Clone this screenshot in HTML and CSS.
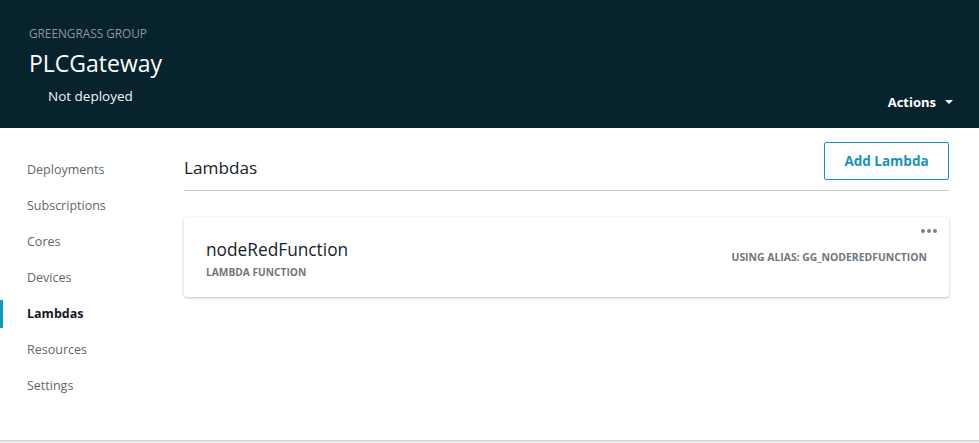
FILE: index.html
```html
<!DOCTYPE html>
<html>
<head>
<meta charset="utf-8">
<link rel="stylesheet" href="styles.css">
</head>
<body>
<div class="page">
  <header class="top">
    <div class="top-left">
      <div class="eyebrow">GREENGRASS GROUP</div>
      <h1 class="title">PLCGateway</h1>
      <div class="status">Not deployed</div>
    </div>
    <div class="actions">Actions <span class="caret"></span></div>
  </header>
  <div class="body">
    <nav class="nav">
      <a class="nav-item">Deployments</a>
      <a class="nav-item">Subscriptions</a>
      <a class="nav-item">Cores</a>
      <a class="nav-item">Devices</a>
      <a class="nav-item active">Lambdas</a>
      <a class="nav-item">Resources</a>
      <a class="nav-item">Settings</a>
    </nav>
    <main class="main">
      <div class="section-head">
        <h2 class="section-title">Lambdas</h2>
        <button class="btn">Add Lambda</button>
      </div>
      <div class="card">
        <div class="card-left">
          <div class="card-title">nodeRedFunction</div>
          <div class="card-sub">LAMBDA FUNCTION</div>
        </div>
        <div class="card-alias">USING ALIAS: GG_NODEREDFUNCTION</div>
        <div class="dots"><span></span><span></span><span></span></div>
      </div>
    </main>
  </div>
</div>
</body>
</html>
```
FILE: styles.css
```css
* { box-sizing: border-box; }
html, body { margin: 0; padding: 0; }
body {
  font-family: "Open Sans", "Noto Sans", sans-serif;
  background: #eaeded;
  width: 979px;
  height: 443px;
  overflow: hidden;
}
.page {
  height: 440px;
  background: #fff;
  box-shadow: 0 1px 1px #d5d5d5;
  display: flex;
  flex-direction: column;
}
.top {
  height: 128px;
  background: #06232e;
  display: flex;
  justify-content: space-between;
  align-items: flex-end;
  padding: 0 26px 17px 29px;
}
.top-left {
  align-self: flex-start;
  padding-top: 26px;
}
.eyebrow {
  font-size: 11.8px;
  line-height: 14px;
  color: #8d979c;
}
.title {
  margin: 9px 0 0;
  font-size: 23px;
  font-weight: 400;
  line-height: 28px;
  color: #fff;
}
.status {
  margin: 10px 0 0 19px;
  font-size: 13.5px;
  line-height: 18px;
  color: #f2f3f3;
}
.actions {
  color: #fff;
  font-weight: 700;
  font-size: 13px;
  line-height: 18px;
  display: flex;
  align-items: center;
  gap: 9px;
}
.caret {
  width: 0; height: 0;
  border-left: 4px solid transparent;
  border-right: 4px solid transparent;
  border-top: 4px solid #fff;
}
.body {
  flex: 1;
  display: flex;
}
.nav {
  width: 184px;
  padding-top: 23px;
  display: flex;
  flex-direction: column;
}
.nav-item {
  height: 36px;
  display: flex;
  align-items: center;
  padding-left: 27px;
  font-size: 12.5px;
  color: #5f666d;
  position: relative;
}
.nav-item.active {
  color: #16191f;
  font-weight: 700;
}
.nav-item.active::before {
  content: "";
  position: absolute;
  left: 0; top: 5px;
  width: 3px; height: 28px;
  background: #0a9ac7;
}
.main {
  flex: 1;
  padding-right: 30px;
}
.section-head {
  display: flex;
  justify-content: space-between;
  align-items: flex-end;
  padding-top: 14px;
  padding-bottom: 10px;
  border-bottom: 1px solid #c6c6c6;
}
.section-title {
  margin: 0;
  font-size: 17.2px;
  font-weight: 400;
  line-height: 22px;
  color: #16232b;
  padding-bottom: 1px;
}
.btn {
  height: 38px;
  width: 125px;
  border: 1px solid #1493bd;
  background: #fff;
  color: #1493bd;
  font-family: inherit;
  font-weight: 700;
  font-size: 13.5px;
  border-radius: 2px;
  padding: 0;
}
.card {
  margin-top: 26px;
  height: 80px;
  border-radius: 4px;
  background: #fff;
  box-shadow: 0 1px 3px rgba(0,0,0,0.25);
  display: flex;
  justify-content: space-between;
  align-items: center;
  padding: 0 22px;
  position: relative;
}
.card-left { padding-top: 4px; }
.card-title {
  font-size: 17.3px;
  line-height: 22px;
  color: #16232b;
}
.card-sub {
  margin-top: 4px;
  font-size: 10.2px;
  font-weight: 700;
  line-height: 14px;
  color: #6f767c;
}
.card-alias {
  font-size: 10.4px;
  font-weight: 700;
  color: #6f767c;
  margin-top: 0;
}
.dots {
  position: absolute;
  top: 12px;
  right: 12px;
  display: flex;
  gap: 2px;
}
.dots span {
  width: 4px; height: 4px;
  border-radius: 50%;
  background: #7a8086;
}
```
